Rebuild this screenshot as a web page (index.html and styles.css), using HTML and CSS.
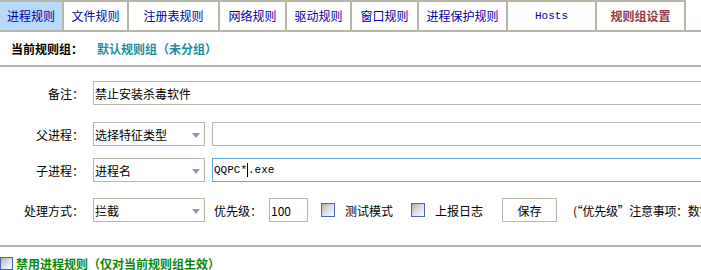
FILE: index.html
```html
<!DOCTYPE html>
<html lang="zh-CN">
<head>
    <meta charset="UTF-8">
    <title>进程规则</title>
    <link rel="stylesheet" href="styles.css">
</head>
<body>
    <div class="tabs">
        <a class="tab active">进程规则</a>
        <a class="tab">文件规则</a>
        <a class="tab">注册表规则</a>
        <a class="tab">网络规则</a>
        <a class="tab">驱动规则</a>
        <a class="tab">窗口规则</a>
        <a class="tab">进程保护规则</a>
        <a class="tab hosts">Hosts</a>
        <a class="tab group-set">规则组设置</a>
    </div>

    <div class="current">
        <span class="current-label">当前规则组：</span>
        <span class="current-name">默认规则组（未分组）</span>
    </div>

    <div class="form">
        <div class="row row-note">
            <label class="label">备注：</label>
            <input class="text wide" type="text" value="禁止安装杀毒软件">
        </div>
        <div class="row row-parent">
            <label class="label">父进程：</label>
            <div class="select">
                <span>选择特征类型</span>
                <svg class="arrow" width="8" height="5" viewBox="0 0 8 5"><path d="M0 0h8L4 5z" fill="#9494a8"/></svg>
            </div>
            <input class="text wide" type="text" value="">
        </div>
        <div class="row row-child">
            <label class="label">子进程：</label>
            <div class="select">
                <span>进程名</span>
                <svg class="arrow" width="8" height="5" viewBox="0 0 8 5"><path d="M0 0h8L4 5z" fill="#9494a8"/></svg>
            </div>
            <div class="text wide focus"><span class="mono">QQPC*</span><span class="caret"></span><span class="mono">.exe</span></div>
        </div>
        <div class="row row-action">
            <label class="label">处理方式：</label>
            <div class="select">
                <span>拦截</span>
                <svg class="arrow" width="8" height="5" viewBox="0 0 8 5"><path d="M0 0h8L4 5z" fill="#9494a8"/></svg>
            </div>
            <span class="inline-label">优先级：</span>
            <input class="text priority" type="text" value="100">
            <span class="check check-test"></span>
            <span class="check-text">测试模式</span>
            <span class="check check-log"></span>
            <span class="check-text">上报日志</span>
            <button class="save">保存</button>
            <span class="note">(“优先级”注意事项：数字</span>
        </div>
    </div>

    <div class="footer">
        <span class="check"></span>
        <span class="footer-text">禁用进程规则（仅对当前规则组生效）</span>
    </div>
</body>
</html>
```

FILE: styles.css
```css
body {
    margin: 0;
    background: #fff;
    font-family: "Noto Sans CJK SC", "Liberation Sans", sans-serif;
    font-size: 12px;
    color: #000;
    overflow: hidden;
    width: 701px;
}

.tabs {
    display: flex;
    border-bottom: 2px solid #b6b6a6;
    height: 30px;
}

.tab {
    height: 28px;
    line-height: 28px;
    border-top: 2px solid #b6b6a6;
    border-right: 2px solid #b6b6a6;
    text-align: center;
    color: #0000a8;
    font-size: 12px;
    white-space: nowrap;
    box-sizing: content-box;
    flex-shrink: 0;
}

.tab:nth-child(1) { width: 62px; }
.tab:nth-child(2) { width: 63px; }
.tab:nth-child(3) { width: 89px; }
.tab:nth-child(4) { width: 65px; }
.tab:nth-child(5) { width: 63px; }
.tab:nth-child(6) { width: 65px; }
.tab:nth-child(7) { width: 87px; }
.tab:nth-child(8) { width: 87px; }
.tab:nth-child(9) { width: 87px; }

.tab.active {
    background: #b8dafa;
}

.tab.hosts {
    font-family: "Liberation Mono", monospace;
    font-size: 11px;
}

.tab.group-set {
    color: #8c3c4c;
    font-weight: bold;
}

.current {
    height: 33px;
    line-height: 33px;
    border-bottom: 2px solid #b6b6a6;
    padding-left: 11px;
    display: flex;
}

.current-label {
    font-weight: bold;
    width: 86px;
}

.current-name {
    font-weight: bold;
    color: #1a8ea0;
}

.form {
    padding-top: 14px;
    padding-bottom: 23px;
    border-bottom: 2px solid #b6b6a6;
}

.row {
    display: flex;
    align-items: center;
    height: 24px;
    white-space: nowrap;
}

.row > * {
    flex-shrink: 0;
}

.row-parent { margin-top: 17px; }
.row-child { margin-top: 12px; }
.row-action { margin-top: 16px; }

.label {
    width: 84px;
    margin-right: 9px;
    text-align: right;
}

.text {
    box-sizing: border-box;
    height: 24px;
    border: 1px solid #b8b8a8;
    padding: 0 1px;
    font-family: "Noto Sans CJK SC", sans-serif;
    font-size: 12px;
    color: #000;
    background: #fff;
    outline: none;
    margin: 0;
}

.wide {
    width: 620px;
}

.select + .wide {
    margin-left: 7px;
}

.focus {
    border-color: #5aa8e6;
    display: flex;
    align-items: center;
}

.mono {
    font-family: "Liberation Mono", monospace;
    font-size: 11px;
}

.caret {
    width: 1px;
    height: 14px;
    background: #000;
}

.select {
    box-sizing: border-box;
    width: 112px;
    height: 24px;
    border: 1px solid #b8b8a8;
    padding-left: 1px;
    display: flex;
    align-items: center;
    justify-content: space-between;
}

.arrow {
    margin-right: 4px;
    margin-top: 2px;
}

.inline-label {
    margin-left: 9px;
    width: 55px;
}

.priority {
    width: 39px;
}

.check {
    box-sizing: border-box;
    display: inline-block;
    width: 14px;
    height: 14px;
    border: 1px solid #4a68a8;
    background: linear-gradient(135deg, #b4b498 0%, #d8d8e8 45%, #eeeefa 75%, #fafaff 100%);
    flex-shrink: 0;
}

.check-test {
    margin-left: 13px;
}

.check-log {
    margin-left: 18px;
}

.check-text {
    margin-left: 10px;
}

.save {
    box-sizing: border-box;
    margin-left: 19px;
    width: 55px;
    height: 24px;
    border: 1px solid #b8b8a8;
    background: #fff;
    font-family: "Noto Sans CJK SC", sans-serif;
    font-size: 12px;
    padding: 0;
    color: #000;
}

.note {
    margin-left: 16px;
    letter-spacing: -0.3px;
}

.footer {
    display: flex;
    align-items: center;
    padding-top: 9px;
    height: 14px;
}

.footer .check {
    width: 13px;
    height: 13px;
}

.footer-text {
    margin-left: 3px;
    font-weight: bold;
    color: #0a8a0a;
}
```
